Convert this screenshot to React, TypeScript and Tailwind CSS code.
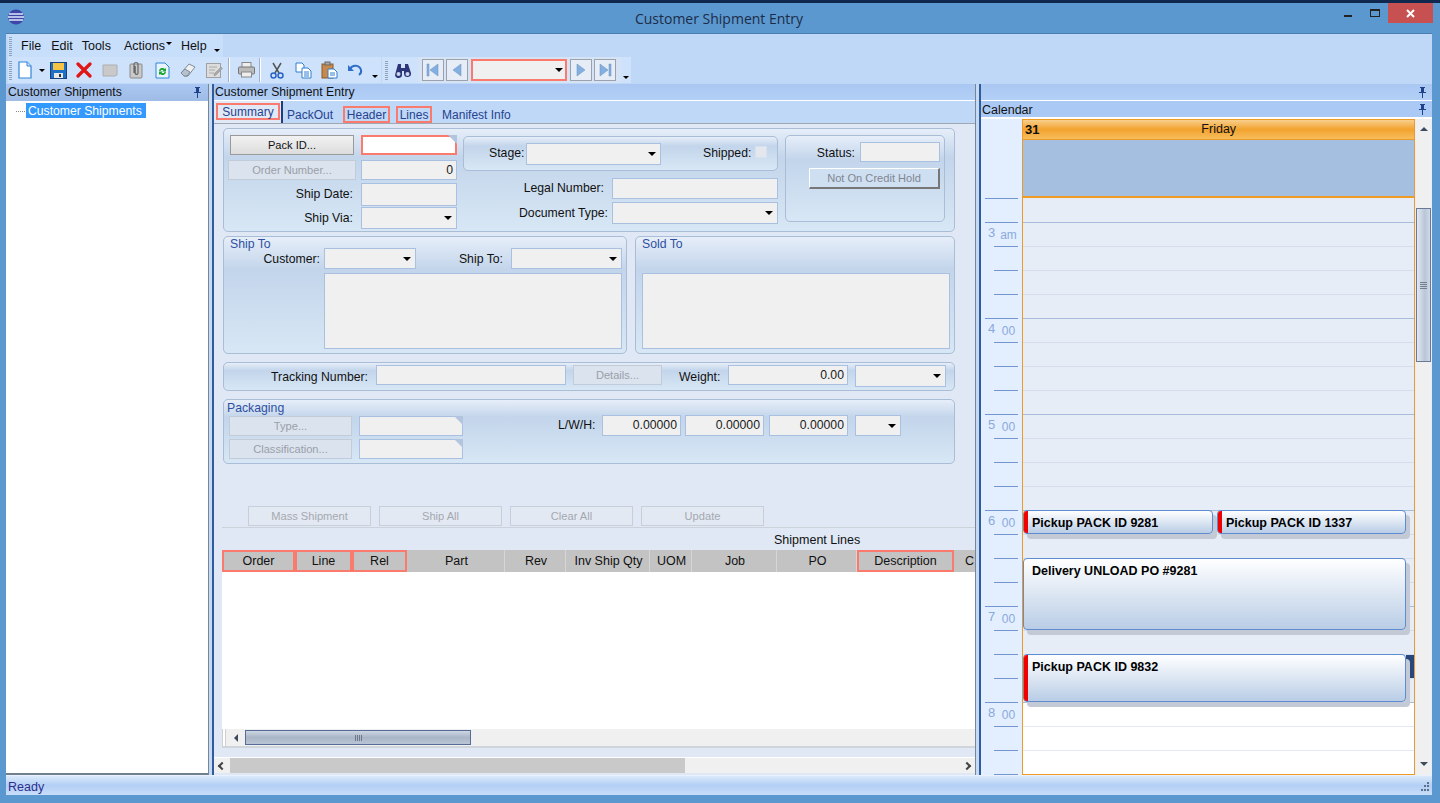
import { ReactNode } from "react";

const font = { fontFamily: '"Liberation Sans", Arial, sans-serif' };

const groupBg = "bg-[linear-gradient(180deg,#e6eef9_0%,#c3d5eb_28%,#d7e7f5_100%)]";

function Arrow() {
  return <span className="h-0 w-0 border-x-[4px] border-t-[4px] border-x-transparent border-t-black" />;
}

function Field({ className = "", value, corner }: { className?: string; value?: string; corner?: boolean }) {
  return (
    <div className={`relative flex shrink-0 items-center justify-end border border-[#a9c0e0] bg-[#f0f0f0] pr-[3px] text-[#1a1a1a] ${className}`}>
      {value}
      {corner && <span className="absolute right-[-1px] top-[-1px] h-0 w-0 border-l-[9px] border-t-[9px] border-l-transparent border-t-[#b2c4de]" />}
    </div>
  );
}

function Select({ className = "" }: { className?: string }) {
  return (
    <div className={`flex shrink-0 items-center justify-end border border-[#a9c0e0] bg-[#f0f0f0] pr-[4px] ${className}`}>
      <Arrow />
    </div>
  );
}

function Btn({ className = "", children }: { className?: string; children: ReactNode }) {
  return <div className={`flex shrink-0 items-center justify-center border text-[11.100px] ${className}`}>{children}</div>;
}

function Group({ className = "", children }: { className?: string; children: ReactNode }) {
  return <div className={`rounded-[5px] border border-[#a9bdd6] ${groupBg} ${className}`}>{children}</div>;
}

function Label({ className = "", children }: { className?: string; children: ReactNode }) {
  return <div className={`shrink-0 whitespace-nowrap text-right text-[#111] ${className}`}>{children}</div>;
}

const disabledBtn = "border-[#c2ccd8] bg-[#dbe3ee] text-[#9a9fa8]";

function Pin() {
  return (
    <svg width="9" height="11" viewBox="0 0 9 11" className="shrink-0">
      <path d="M2 0h5v1h-1v4h2v1H1V5h2V1H2zM4 6h1v5H4z" fill="#20428a" />
    </svg>
  );
}

function Gripper() {
  return <div className="h-[19px] w-[3px] shrink-0 bg-[repeating-linear-gradient(180deg,#8fa3bd_0,#8fa3bd_1px,transparent_1px,transparent_2px)]" />;
}

function IconCell({ children }: { children: ReactNode }) {
  return <div className="flex h-[26px] w-[26px] shrink-0 items-center justify-center">{children}</div>;
}

function Chevron({ className = "" }: { className?: string }) {
  return <span className={`h-0 w-0 border-x-[3px] border-t-[3px] border-x-transparent border-t-black ${className}`} />;
}

function NavBtn({ d }: { d: ReactNode }) {
  return (
    <div className="flex h-[22px] w-[22px] shrink-0 items-center justify-center border border-[#9aa3ad] bg-[#e6edf6]">
      <svg width="14" height="14" viewBox="0 0 14 14">{d}</svg>
    </div>
  );
}

function Toolbar() {
  return (
    <div className="flex h-[27px] shrink-0 items-start">
      <div className="ml-[2px] flex h-[26px] w-[373px] shrink-0 items-center bg-[#cfe2fc] pl-[1px]">
        <Gripper />
        <IconCell>
          <svg width="16" height="18" viewBox="0 0 16 18"><path d="M2 1h8l4 4v12H2z" fill="#fff" stroke="#2f86d8" strokeWidth="1.2" /><path d="M10 1v4h4" fill="#cfe6fb" stroke="#2f86d8" /></svg>
        </IconCell>
        <div className="flex w-[7px] shrink-0 justify-center"><Chevron /></div>
        <IconCell>
          <svg width="17" height="17" viewBox="0 0 17 17"><rect x="0.5" y="0.5" width="16" height="16" fill="#1f6fc4" stroke="#16427f" /><rect x="3" y="1" width="11" height="7" fill="#f6c343" /><rect x="4" y="11" width="9" height="5" fill="#e8e8e8" /><rect x="9" y="12" width="2" height="3" fill="#333" /></svg>
        </IconCell>
        <IconCell>
          <svg width="16" height="16" viewBox="0 0 16 16"><path d="M2 2l12 12M14 2L2 14" stroke="#e01515" strokeWidth="3.2" strokeLinecap="round" /></svg>
        </IconCell>
        <IconCell>
          <svg width="16" height="14" viewBox="0 0 16 14"><path d="M1 2h14v10l-2 1H1z" fill="#c9c9c9" stroke="#aeaeae" /></svg>
        </IconCell>
        <IconCell>
          <svg width="16" height="18" viewBox="0 0 16 18"><rect x="2" y="3" width="12" height="14" rx="1" fill="#c9c9c9" stroke="#8a8a8a" /><path d="M6 12V3.5a2 2 0 0 1 4 0V12a1.4 1.4 0 0 1-2.8 0V5" fill="none" stroke="#666" strokeWidth="1.2" /></svg>
        </IconCell>
        <IconCell>
          <svg width="15" height="17" viewBox="0 0 15 17"><path d="M1 1h9l4 4v11H1z" fill="#e8f3fd" stroke="#2f86d8" /><path d="M4 9a3.5 3.5 0 0 1 6-2l1-1v3.5H7.5l1-1A2 2 0 0 0 5.4 9zM11 10a3.5 3.5 0 0 1-6 2l-1 1V9.500h3.500l-1 1a2 2 0 0 0 3.100-.5z" fill="#17a52b" /></svg>
        </IconCell>
        <IconCell>
          <svg width="16" height="16" viewBox="0 0 16 16"><path d="M1 11l8-9 6 3-7 9H4z" fill="#f0f0f0" stroke="#7b8a99" /><path d="M1 11l4-4 5 3-3 4H4z" fill="#b8c2cc" stroke="#7b8a99" /></svg>
        </IconCell>
        <IconCell>
          <svg width="17" height="15" viewBox="0 0 17 15"><rect x="0.500" y="0.500" width="14" height="14" fill="#ddd" stroke="#a0a0a0" /><path d="M3 4h8M3 7h6M3 10h5" stroke="#aaa" /><path d="M8 11l7-7 1.500 1.500-7 7H8z" fill="#aaa" stroke="#888" strokeWidth="0.5" /></svg>
        </IconCell>
        <div className="ml-[1px] h-[24px] w-[2px] shrink-0 border-l border-r border-l-[#9fb0c8] border-r-white" />
        <div className="w-[3px] shrink-0" />
        <IconCell>
          <svg width="17" height="16" viewBox="0 0 17 16"><rect x="4" y="0.500" width="9" height="5" fill="#eee" stroke="#888" /><rect x="0.500" y="5" width="16" height="7" rx="1" fill="#bbb" stroke="#777" /><rect x="3.500" y="10" width="10" height="5" fill="#eee" stroke="#888" /></svg>
        </IconCell>
        <div className="h-[24px] w-[2px] shrink-0 border-l border-r border-l-[#9fb0c8] border-r-white" />
        <div className="w-[3px] shrink-0" />
        <IconCell>
          <svg width="14" height="17" viewBox="0 0 14 17"><path d="M3 1l6 10M11 1L5 11" stroke="#555" strokeWidth="1.500" /><circle cx="3.500" cy="13.500" r="2.500" fill="none" stroke="#2a62c5" strokeWidth="1.500" /><circle cx="10.500" cy="13.500" r="2.500" fill="none" stroke="#2a62c5" strokeWidth="1.500" /></svg>
        </IconCell>
        <IconCell>
          <svg width="17" height="17" viewBox="0 0 17 17"><path d="M1 1h6l2 2v7H1z" fill="#fff" stroke="#2f7fd0" /><path d="M7 6h6l3 3v7H7z" fill="#fff" stroke="#2f7fd0" /><path d="M9 10h5M9 12h5M9 14h5" stroke="#2f7fd0" /></svg>
        </IconCell>
        <IconCell>
          <svg width="17" height="18" viewBox="0 0 17 18"><rect x="1" y="3" width="11" height="14" fill="#c88a4a" stroke="#875a2b" /><rect x="4" y="1" width="5" height="3" fill="#aaa" stroke="#666" /><path d="M7 8h6l3 3v6H7z" fill="#fff" stroke="#2f7fd0" /><path d="M9 12h5M9 14h5" stroke="#2f7fd0" /></svg>
        </IconCell>
        <IconCell>
          <svg width="16" height="14" viewBox="0 0 16 14"><path d="M3 6a6 6 0 0 1 11 1c.5 2-.5 4-2 5" fill="none" stroke="#2f6fc8" strokeWidth="2" /><path d="M1 2v6h6z" fill="#2f6fc8" /></svg>
        </IconCell>
        <Chevron className="ml-[4px] mt-[12px]" />
      </div>
      <div className="w-[1px] shrink-0" />
      <div className="flex h-[26px] shrink-0 items-center bg-[#cfe2fc] pl-[3px]">
        <Gripper />
        <div className="w-[6px] shrink-0" />
        <svg width="18" height="15" viewBox="0 0 18 15" className="shrink-0"><path d="M4 1h3v4h4V1h3l3 9a3.500 3.500 0 0 1-7 1V8H8v3a3.500 3.500 0 0 1-7 1z" fill="#2c3577" /><circle cx="4.500" cy="11" r="2" fill="#cdd6f0" /><circle cx="13.500" cy="11" r="2" fill="#cdd6f0" /></svg>
        <div className="w-[6px] shrink-0" />
        <div className="flex h-[26px] shrink-0 items-center gap-[2px] bg-[#d6e3f5] pl-[4px] pr-[5px]">
          <NavBtn d={<path d="M1 1h2v12H1zM12 1v12L4 7z" fill="#83b0e2" stroke="#6b8fb8" strokeWidth="0.500" />} />
          <NavBtn d={<path d="M11 1v12L3 7z" fill="#83b0e2" stroke="#6b8fb8" strokeWidth="0.500" />} />
          <div className="mx-[1px] flex h-[22px] w-[96px] shrink-0 items-center justify-end border-2 border-[#fa7b6e] bg-[#f0f0f0] pr-[2px]"><Arrow /></div>
          <NavBtn d={<path d="M3 1v12l8-6z" fill="#83b0e2" stroke="#6b8fb8" strokeWidth="0.500" />} />
          <NavBtn d={<path d="M2 1v12l8-6zM11 1h2v12h-2z" fill="#83b0e2" stroke="#6b8fb8" strokeWidth="0.500" />} />
        </div>
        <div className="flex h-[26px] w-[10px] shrink-0 items-end justify-center pb-[4px]"><Chevron /></div>
      </div>
    </div>
  );
}

function Form() {
  return (
    <div className="flex flex-col pl-[9px] pt-[4px] text-[12.250px]">
      {/* header group */}
      <Group className="flex h-[104px] w-[732px] shrink-0">
        <div className="ml-[6px] flex w-[227px] shrink-0 flex-col pt-[6px]">
          <div className="flex">
            <Btn className="h-[20px] w-[124px] border-[#9a9a9a] bg-[linear-gradient(180deg,#f2f2f2,#dcdcdc)] text-[#111]">Pack ID...</Btn>
            <div className="relative ml-[7px] h-[20px] w-[96px] border-2 border-[#fa7b6e] bg-white">
              <span className="absolute right-[-2px] top-[-2px] h-0 w-0 border-l-[9px] border-t-[9px] border-l-transparent border-t-[#b2c4de]" />
            </div>
          </div>
          <div className="mt-[5px] flex -ml-[2px]">
            <Btn className={`h-[20px] w-[128px] ${disabledBtn}`}>Order Number...</Btn>
            <Field className="ml-[5px] h-[20px] w-[96px]" value="0" />
          </div>
          <div className="mt-[3px] flex items-center">
            <Label className="w-[123px]">Ship Date:</Label>
            <Field className="ml-[8px] h-[23px] w-[96px]" />
          </div>
          <div className="mt-[1px] flex items-center">
            <Label className="w-[123px]">Ship Via:</Label>
            <Select className="ml-[8px] h-[22px] w-[96px]" />
          </div>
        </div>
        <div className="ml-[6px] flex w-[315px] shrink-0 flex-col pt-[7px]">
          <Group className="flex h-[35px] w-[315px] items-center">
            <Label className="ml-[25px] w-[35px]">Stage:</Label>
            <Select className="ml-[2px] h-[22px] w-[135px]" />
            <Label className="ml-[42px] w-[48px]">Shipped:</Label>
            <div className="mb-[4px] ml-[4px] h-[12px] w-[12px] border border-[#d8e2ee] bg-[#e4e8ee]" />
          </Group>
          <div className="mt-[7px] flex items-center">
            <Label className="w-[141px]">Legal Number:</Label>
            <Field className="ml-[8px] h-[21px] w-[166px]" />
          </div>
          <div className="mt-[3px] flex items-center">
            <Label className="w-[145px]">Document Type:</Label>
            <Select className="ml-[4px] h-[22px] w-[166px]" />
          </div>
        </div>
        <div className="ml-[7px] shrink-0 pt-[6px]">
          <Group className="flex h-[87px] w-[160px] flex-col pt-[5px]">
            <div className="flex items-center">
              <Label className="w-[69px] pt-[3px]">Status:</Label>
              <Field className="ml-[5px] h-[20px] w-[80px]" />
            </div>
            <Btn className="ml-[23px] mt-[6px] h-[21px] w-[131px] border-b-2 border-r-2 border-b-[#777] border-l-white border-r-[#777] border-t-white bg-[#cfdff2] text-[#808690]">Not On Credit Hold</Btn>
          </Group>
        </div>
      </Group>

      <div className="mt-[4px] flex gap-[8px]">
        <Group className="h-[118px] w-[404px] shrink-0">
          <div className="h-[11px] pl-[6px] leading-[14px] text-[#2f50a0]">Ship To</div>
          <div className="flex items-center">
            <Label className="w-[96px] pt-[2px]">Customer:</Label>
            <Select className="ml-[4px] h-[21px] w-[92px]" />
            <Label className="w-[87px] pt-[2px]">Ship To:</Label>
            <Select className="ml-[8px] h-[21px] w-[111px]" />
          </div>
          <Field className="ml-[100px] mt-[4px] h-[76px] w-[298px]" />
        </Group>
        <Group className="h-[118px] w-[320px] shrink-0 pl-[6px]">
          <div className="h-[36px] leading-[14px] text-[#2f50a0]">Sold To</div>
          <Field className="h-[76px] w-[308px]" />
        </Group>
      </div>

      <Group className="mt-[8px] flex h-[29px] w-[732px] shrink-0 items-start pt-[2px]">
        <Label className="w-[144px] leading-[24px]">Tracking Number:</Label>
        <Field className="ml-[8px] h-[20px] w-[190px]" />
        <Btn className={`ml-[7px] h-[20px] w-[89px] ${disabledBtn}`}>Details...</Btn>
        <Label className="ml-[17px] w-[41px] leading-[24px]">Weight:</Label>
        <Field className="ml-[8px] h-[20px] w-[120px]" value="0.00" />
        <Select className="ml-[7px] h-[22px] w-[91px]" />
      </Group>

      <Group className="mt-[8px] h-[65px] w-[732px] shrink-0">
        <div className="h-[16px] pl-[3px] leading-[16px] text-[#2f50a0]">Packaging</div>
        <div className="flex">
          <div className="ml-[5px] flex w-[234px] shrink-0 flex-col gap-[3px]">
            <div className="flex">
              <Btn className={`h-[20px] w-[123px] ${disabledBtn}`}>Type...</Btn>
              <Field className="ml-[7px] h-[20px] w-[104px]" corner />
            </div>
            <div className="flex">
              <Btn className={`h-[20px] w-[123px] ${disabledBtn}`}>Classification...</Btn>
              <Field className="ml-[7px] h-[20px] w-[104px]" corner />
            </div>
          </div>
          <div className="-mt-[1px] flex items-start">
            <Label className="ml-[95px] w-[36px] leading-[21px]">L/W/H:</Label>
            <Field className="ml-[8px] h-[21px] w-[79px]" value="0.00000" />
            <Field className="ml-[4px] h-[21px] w-[79px]" value="0.00000" />
            <Field className="ml-[5px] h-[21px] w-[79px]" value="0.00000" />
            <Select className="ml-[7px] h-[21px] w-[46px]" />
          </div>
        </div>
      </Group>

      <div className="ml-[25px] mt-[42px] flex gap-[8px]">
        {["Mass Shipment", "Ship All", "Clear All", "Update"].map((t) => (
          <Btn key={t} className="h-[20px] w-[123px] border-[#c6cfda] bg-[#e3e9f2] text-[#a3a8b0]">{t}</Btn>
        ))}
      </div>
    </div>
  );
}

const columns = [
  { t: "Order", w: "w-[73px]", red: true },
  { t: "Line", w: "w-[57px]", red: true },
  { t: "Rel", w: "w-[55px]", red: true },
  { t: "Part", w: "w-[98px]" },
  { t: "Rev", w: "w-[61px]" },
  { t: "Inv Ship Qty", w: "w-[84px]" },
  { t: "UOM", w: "w-[42px]" },
  { t: "Job", w: "w-[85px]" },
  { t: "PO", w: "w-[80px]" },
  { t: "Description", w: "w-[97px]", red: true },
  { t: "C", w: "w-[21px]" },
];

function LinesGrid() {
  return (
    <div className="ml-[8px] mt-[1px] flex w-[753px] flex-col border-b-2 border-t border-b-[#d0d5dc] border-t-[#ccd2da] text-[12.500px]">
      <div className="h-[22px] pl-[552px] leading-[24px] text-[#111]">Shipment Lines</div>
      <div className="flex h-[22px] overflow-hidden bg-[#c3c3c3] text-[#111]">
        {columns.map((c) => (
          <div
            key={c.t}
            className={`flex shrink-0 items-center overflow-hidden ${c.w} ${c.red ? "justify-center border-2 border-[#fa7b6e]" : c.t === "C" ? "pl-[11px]" : "justify-center border-r border-[#d6d6d6] pl-[2px]"}`}
          >
            {c.t}
          </div>
        ))}
      </div>
      <div className="h-[157px] bg-white" />
      <div className="flex h-[17px] items-center bg-[#f0f0f0]">
        <div className="h-[17px] w-[4px] border-x border-[#d0d0d0] bg-white" />
        <div className="ml-[8px] h-0 w-0 border-y-[4px] border-r-[4px] border-y-transparent border-r-[#3c4a60]" />
        <div className="ml-[7px] flex h-[15px] w-[226px] items-center justify-center border border-[#566b95] bg-[linear-gradient(180deg,#cdd6e2,#a9b6c8_50%,#b9c5d4)]">
          <div className="h-[6px] w-[7px] bg-[repeating-linear-gradient(90deg,#6e7886_0,#6e7886_1px,transparent_1px,transparent_2px)]" />
        </div>
      </div>
    </div>
  );
}

type Slot = { h?: string; m?: string };

const slots: Slot[] = [
  {},
  { h: "3", m: "am" }, {}, {}, {},
  { h: "4", m: "00" }, {}, {}, {},
  { h: "5", m: "00" }, {}, {}, {},
  { h: "6", m: "00" }, {}, {}, {},
  { h: "7", m: "00" }, {}, {}, {},
  { h: "8", m: "00" }, {}, {},
];

function CalEvent({ className = "", title, red }: { className?: string; title: string; red?: boolean }) {
  return (
    <div className={`absolute flex rounded-[4px] border border-[#5f8bd0] bg-[linear-gradient(180deg,#ffffff,#b9cde6)] shadow-[4px_5px_0_#c3cad6] ${className}`}>
      {red && <div className="h-full w-[4px] shrink-0 rounded-l-[3px] bg-[#f00000]" />}
      <div className={`whitespace-nowrap pt-[4px] text-[12.500px] font-bold leading-[17px] text-black ${red ? "pl-[4px]" : "pl-[8px]"}`}>{title}</div>
    </div>
  );
}

function CalendarPanel() {
  return (
    <div className="flex w-[451px] shrink-0 flex-col bg-[#e3efff]">
      <div className="flex h-[16px] shrink-0 items-center justify-end bg-[linear-gradient(180deg,#a9c7f2,#b3cff6)] pr-[5px]"><Pin /></div>
      <div className="h-[1px] shrink-0 bg-white" />
      <div className="flex h-[16px] shrink-0 items-center justify-between bg-[#abc9f5] pr-[5px] text-[12.500px] text-[#111]">
        <span className="pl-[1px] pt-[2px]">Calendar</span>
        <Pin />
      </div>
      <div className="h-[2px] shrink-0 bg-white" />
      <div className="flex min-h-0 flex-1">
        <div className="flex h-[656px] w-[41px] shrink-0 flex-col overflow-hidden">
          <div className="flex h-[80px] shrink-0 justify-end pr-[4px]">
            <div className="mt-[79px] h-[1px] w-[33px] bg-[#7396d0]" />
          </div>
          {slots.map((s, i) => (
            <div key={i} className="relative flex h-[24px] shrink-0 items-start justify-end pr-[5px] pt-[3px] text-[#8aa9dc]">
              {s.h && (
                <div className="flex w-[29px] items-start justify-between">
                  <span className="text-[13px] leading-[14px]">{s.h}</span>
                  <span className="mt-[1px] w-[17px] text-center text-[12px] leading-[16px]">{s.m}</span>
                </div>
              )}
              <div className={`absolute bottom-0 right-[4px] h-[1px] bg-[#7396d0] ${slots[i + 1]?.h ? "w-[33px]" : "w-[24px]"}`} />
            </div>
          ))}
        </div>
        <div className="flex h-[656px] w-[393px] shrink-0 flex-col overflow-hidden border border-[#ef9a24]">
          <div className="flex h-[19px] shrink-0 items-center bg-[linear-gradient(180deg,#f8cf8c,#f3a32e_50%,#f6bd5d)] pl-[2px] text-[12.500px] text-[#111]">
            <span className="text-[13px] font-bold">31</span>
            <span className="flex-1 pr-[16px] text-center">Friday</span>
          </div>
          <div className="h-[59px] shrink-0 border-b-2 border-t border-b-[#ef9a24] border-t-[#ef9a24] bg-[#a5bfe0]" />
          <div className="relative flex-1 bg-[#e6edf7]">
            {slots.map((s, i) => (
              <div key={i} className={`border-b ${i === 0 ? "h-[25px]" : "h-[24px]"} ${slots[i + 1]?.h ? "border-[#a8bcdc]" : "border-[#d5deec]"}`} />
            ))}
            <div className="absolute inset-x-0 top-[505px] h-[80px] bg-white">
              <div className="mt-[23px] h-[1px] bg-[#e1e9f4]" />
              <div className="mt-[23px] h-[1px] bg-[#e1e9f4]" />
            </div>
            <div className="absolute left-[383px] top-[457px] h-[23px] w-[8px] bg-[#27477a]" />
            <CalEvent className="left-[0px] top-[312px] h-[24px] w-[190px]" title="Pickup PACK ID 9281" red />
            <CalEvent className="left-[194px] top-[312px] h-[24px] w-[189px]" title="Pickup PACK ID 1337" red />
            <CalEvent className="left-[0px] top-[360px] h-[72px] w-[383px]" title="Delivery UNLOAD PO #9281" />
            <CalEvent className="left-[0px] top-[456px] h-[48px] w-[383px]" title="Pickup PACK ID 9832" red />
          </div>
        </div>
        <div className="ml-[1px] flex w-[15px] shrink-0 flex-col items-center bg-[#f0f0f0]">
          <div className="mt-[8px] h-0 w-0 border-x-[4px] border-b-[4px] border-x-transparent border-b-[#3c4a60]" />
          <div className="mt-[77px] flex h-[154px] w-[15px] shrink-0 items-center justify-center border border-[#6a7a96] bg-[linear-gradient(90deg,#e3e8f0,#b9c6d8_60%,#d0d9e5)]">
            <div className="h-[7px] w-[7px] bg-[repeating-linear-gradient(180deg,#737d8b_0,#737d8b_1px,transparent_1px,transparent_2px)]" />
          </div>
          <div className="mt-[400px] h-0 w-0 border-x-[4px] border-t-[4px] border-x-transparent border-t-[#3c4a60]" />
        </div>
      </div>
    </div>
  );
}

function Splitter() {
  return <div className="h-full w-[6px] shrink-0 border-l border-r-2 border-l-[#76869a] border-r-[#2f5c9e] bg-[#c7daf3]" />;
}

export default function App() {
  return (
    <div className="flex h-[803px] w-[1440px] flex-col overflow-hidden bg-[#5b98cf]" style={font}>
      <div className="h-[3px] shrink-0 bg-[#10284d]" />
      {/* title bar */}
      <div className="flex h-[30px] shrink-0 pl-[8px] pr-[7px]">
        <svg width="16" height="16" viewBox="0 0 16 16" className="mt-[6px] shrink-0">
          <ellipse cx="8" cy="8" rx="8" ry="7.500" fill="#3d47a8" />
          <path d="M1 5h14M0 8h16M1 11h14" stroke="#dfe9fb" strokeWidth="1.400" />
        </svg>
        <div className="flex-1 pl-[70px] pt-[5px] text-center text-[14px] text-[#1c2c48]" style={{ fontFamily: '"Open Sans", sans-serif' }}>Customer Shipment Entry</div>
        <div className="mt-[12px] h-[2px] w-[8px] shrink-0 bg-[#222]" />
        <div className="ml-[18px] mt-[6px] h-[8px] w-[10px] shrink-0 border border-t-2 border-[#222]" />
        <div className="ml-[8px] flex h-[20px] w-[45px] shrink-0 items-center justify-center bg-[#c75050]">
          <svg width="9" height="9" viewBox="0 0 9 9"><path d="M1 1l7 7M8 1L1 8" stroke="#fff" strokeWidth="2" /></svg>
        </div>
      </div>
      <div className="mx-[6px] flex h-[762px] w-[1426px] shrink-0 flex-col border-t border-[#4a7fb0] bg-[#bfd8f8]">
        {/* menu */}
        <div className="ml-[2px] flex h-[23px] w-[215px] shrink-0 items-center bg-[#c8dffc] pl-[1px] pt-[1px] text-[12.500px] text-[#111]">
          <Gripper />
          <span className="ml-[9px]">File</span>
          <span className="ml-[10px]">Edit</span>
          <span className="ml-[9px]">Tools</span>
          <span className="ml-[13px]">Actions</span>
          <Chevron className="mb-[5px] ml-[1px]" />
          <span className="ml-[9px]">Help</span>
          <Chevron className="ml-[7px] mt-[8px]" />
        </div>
        <Toolbar />
        {/* panels */}
        <div className="flex h-[691px] shrink-0">
          <div className="flex w-[202px] shrink-0 flex-col">
            <div className="flex h-[17px] shrink-0 items-center justify-between bg-[linear-gradient(180deg,#a9c7f2,#9fbce6)] pl-[2px] pr-[6px] text-[12.200px] text-[#111]">
              <span>Customer Shipments</span>
              <Pin />
            </div>
            <div className="h-[674px] border-b-2 border-b-[#70808f] bg-white pt-[2px]">
              <div className="flex items-center pl-[10px]">
                <div className="mt-[1px] h-[1px] w-[10px] bg-[repeating-linear-gradient(90deg,#8a8a8a_0,#8a8a8a_1px,transparent_1px,transparent_2px)]" />
                <div className="h-[15px] w-[120px] bg-[#3399ff] pl-[2px] text-[12.200px] leading-[16px] text-white">Customer Shipments</div>
              </div>
            </div>
          </div>
          <Splitter />
          <div className="flex w-[761px] shrink-0 flex-col">
            <div className="flex h-[16px] shrink-0 items-center bg-[linear-gradient(180deg,#a9c7f2,#b3cff6)] pl-[1px] text-[12.200px] text-[#111]">Customer Shipment Entry</div>
            <div className="h-[1px] shrink-0 bg-white" />
            <div className="flex h-[23px] shrink-0 border-b border-[#9fa8b4] bg-[#bfd8f8] text-[12px] text-[#26428f]">
              <div className="flex h-[22px] w-[67px] shrink-0 items-start bg-[#e0e9f5] pl-[2px] pt-[2px]">
                <div className="flex h-[17px] w-[64px] items-center justify-center border-2 border-[#fa7b6e] pt-[1px]">Summary</div>
              </div>
              <div className="h-[22px] w-[2px] shrink-0 bg-[#1f3f7c]" />
              <div className="ml-[4px] flex h-[22px] items-center pt-[5px]">PackOut</div>
              <div className="ml-[10px] mt-[5px] flex h-[17px] w-[47px] shrink-0 items-center justify-center border-2 border-[#fa7b6e]">Header</div>
              <div className="ml-[6px] mt-[5px] flex h-[17px] w-[36px] shrink-0 items-center justify-center border-2 border-[#fa7b6e]">Lines</div>
              <div className="ml-[10px] flex h-[22px] items-center pt-[5px]">Manifest Info</div>
            </div>
            <div className="flex h-[651px] flex-col bg-[#dfe8f4]">
              <Form />
              <LinesGrid />
              <div className="mt-[9px] h-[1px] bg-white" />
              <div className="flex h-[15px] items-center bg-[#f0f0f0]">
                <div className="ml-[5px] h-[6px] w-[6px] rotate-45 border-b-2 border-l-2 border-[#444]" />
                <div className="ml-[5px] h-[15px] w-[455px] bg-[#c9c9c9]" />
                <div className="ml-[279px] h-[6px] w-[6px] rotate-45 border-r-2 border-t-2 border-[#444]" />
              </div>
            </div>
          </div>
          <Splitter />
          <CalendarPanel />
        </div>
        {/* status bar */}
        <div className="relative flex h-[20px] shrink-0 items-center border-t border-[#e8f1fd] bg-[linear-gradient(180deg,#dbe9fb,#b2cff5_50%,#c9defa)] pl-[2px] pt-[3px] text-[12.500px] text-[#2d2d8f]">
          Ready
          <svg width="12" height="12" viewBox="0 0 12 12" className="absolute bottom-[2px] right-[2px]">
            <path d="M9 1h2v2H9zM6 4h2v2H6zM9 4h2v2H9zM3 8h2v2H3zM6 8h2v2H6zM9 8h2v2H9z" fill="#5a6f8a" />
          </svg>
        </div>
      </div>
    </div>
  );
}
